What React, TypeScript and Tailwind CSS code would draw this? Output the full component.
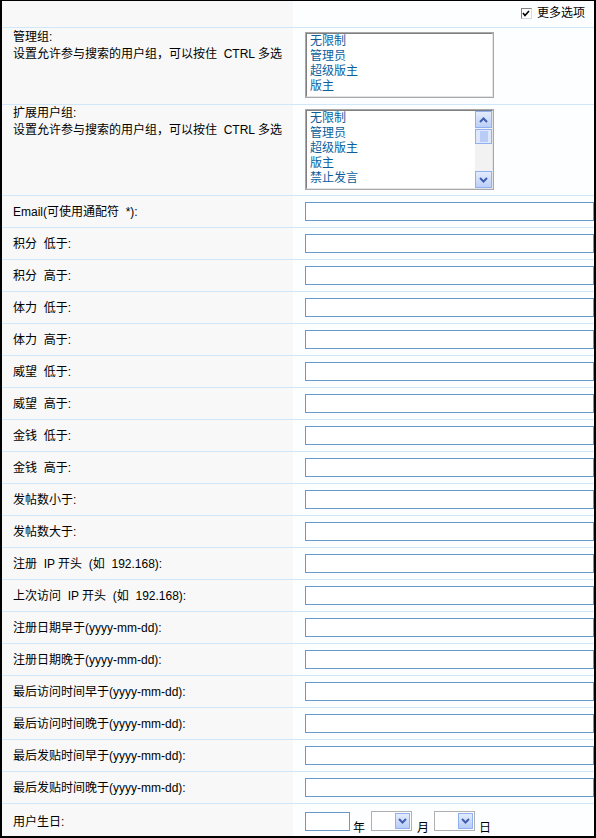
import React from "react";

const font = "font-['Liberation_Sans','Noto_Sans_CJK_SC',sans-serif]";

const fieldLabels = [
  "Email(可使用通配符\u00a0 *):",
  "积分\u00a0 低于:",
  "积分\u00a0 高于:",
  "体力\u00a0 低于:",
  "体力\u00a0 高于:",
  "威望\u00a0 低于:",
  "威望\u00a0 高于:",
  "金钱\u00a0 低于:",
  "金钱\u00a0 高于:",
  "发帖数小于:",
  "发帖数大于:",
  "注册\u00a0 IP 开头\u00a0 (如\u00a0 192.168):",
  "上次访问\u00a0 IP 开头\u00a0 (如\u00a0 192.168):",
  "注册日期早于(yyyy-mm-dd):",
  "注册日期晚于(yyyy-mm-dd):",
  "最后访问时间早于(yyyy-mm-dd):",
  "最后访问时间晚于(yyyy-mm-dd):",
  "最后发贴时间早于(yyyy-mm-dd):",
  "最后发贴时间晚于(yyyy-mm-dd):",
];

function Chevron({ up }: { up?: boolean }) {
  return (
    <svg width="9" height="6" viewBox="0 0 9 6">
      <path
        d={up ? "M1 5 L4.5 1.5 L8 5" : "M1 1 L4.5 4.5 L8 1"}
        fill="none"
        stroke="#3f5fae"
        strokeWidth="2"
      />
    </svg>
  );
}

function ScrollBtn({ up }: { up?: boolean }) {
  return (
    <div className="flex h-[17px] w-[17px] items-center justify-center border border-[#8fb0f2] bg-gradient-to-b from-[#e4ecfd] to-[#bccff8]">
      <Chevron up={up} />
    </div>
  );
}

function ListBox({ items, height, scroll }: { items: string[]; height: string; scroll?: boolean }) {
  return (
    <div className={`w-[189px] ${height} border border-[#a8a8a8] bg-white`}>
      <div className="flex h-full border-t border-l border-t-[#7f7f7f] border-l-[#7f7f7f] border-b border-r border-b-[#e4e4e4] border-r-[#e4e4e4]">
        <div className="flex-1 pl-[3px] text-[12px] leading-[15px] text-[#0b5e9c]">
          {items.map((t) => (
            <div key={t}>{t}</div>
          ))}
        </div>
        {scroll && (
          <div className="flex w-[17px] flex-col bg-[#f2f2f2]">
            <ScrollBtn up />
            <div className="mt-[1px] flex h-[15px] w-[17px] items-center justify-center border border-[#8fb0f2] bg-[#dfe7fd]">
              <div className="h-[11px] w-[8px] bg-[#b9cbf7]" />
            </div>
            <div className="flex-1" />
            <ScrollBtn />
          </div>
        )}
      </div>
    </div>
  );
}

function DropSelect() {
  return (
    <div className="flex h-[20px] w-[41px] justify-end border border-[#b0b0b0] bg-white p-[1px]">
      <div className="flex h-[16px] w-[15px] items-center justify-center border border-[#8fb0f2] bg-gradient-to-b from-[#e4ecfd] to-[#b8ccf8]">
        <Chevron />
      </div>
    </div>
  );
}

export default function App() {
  return (
    <div className={`${font} flex h-[838px] w-[596px] flex-col overflow-hidden border-x-2 border-t border-b-2 border-black text-[12px] text-black`}>
      <div className="flex h-[27px] shrink-0 border-b border-[#cfe7f8]">
        <div className="w-[291px] bg-[#f8f8f8]" />
        <div className="flex flex-1 items-center justify-end gap-[5px] bg-[#fdfeff] pr-[9px] pb-[2px]">
          <div className="flex h-[11px] w-[11px] items-center justify-center border border-t-[#808080] border-l-[#808080] border-b-[#d8d8d8] border-r-[#d8d8d8] bg-white">
            <svg width="8" height="7" viewBox="0 0 8 7">
              <path d="M1 3 L3 5.5 L7 1" fill="none" stroke="#000" strokeWidth="1.6" />
            </svg>
          </div>
          <span>更多选项</span>
        </div>
      </div>

      <div className="flex h-[77px] shrink-0 border-b border-[#cfe7f8]">
        <div className="w-[291px] bg-[#f8f8f8] pl-[11px] pt-[1px] leading-[17px]">
          <div>管理组:</div>
          <div>设置允许参与搜索的用户组，可以按住&nbsp; CTRL 多选</div>
        </div>
        <div className="flex-1 bg-[#fdfeff] pl-[12px] pt-[4px]">
          <ListBox items={["无限制", "管理员", "超级版主", "版主"]} height="h-[66px]" />
        </div>
      </div>

      <div className="flex h-[91px] shrink-0 border-b border-[#cfe7f8]">
        <div className="w-[291px] bg-[#f8f8f8] pl-[11px] leading-[17px]">
          <div>扩展用户组:</div>
          <div>设置允许参与搜索的用户组，可以按住&nbsp; CTRL 多选</div>
        </div>
        <div className="flex-1 bg-[#fdfeff] pl-[12px] pt-[4px]">
          <ListBox items={["无限制", "管理员", "超级版主", "版主", "禁止发言"]} height="h-[81px]" scroll />
        </div>
      </div>

      {fieldLabels.map((label) => (
        <div key={label} className="flex h-[32px] shrink-0 border-b border-[#cfe7f8]">
          <div className="flex w-[291px] items-center bg-[#f8f8f8] pl-[11px]">{label}</div>
          <div className="flex flex-1 items-center bg-[#fdfeff] pl-[12px]">
            <div className="h-[19px] w-[289px] border border-[#6699cc] bg-white" />
          </div>
        </div>
      ))}

      <div className="flex h-[33px] shrink-0">
        <div className="flex w-[291px] items-center bg-[#f8f8f8] pl-[11px] pt-[2px]">用户生日:</div>
        <div className="flex flex-1 items-end bg-[#fdfeff] pb-[2px] pl-[12px] leading-[14px]">
          <div className="mb-[4px] h-[19px] w-[45px] border border-[#6699cc] bg-white" />
          <span className="ml-[3px] mr-[6px]">年</span>
          <div className="mb-[4px]">
            <DropSelect />
          </div>
          <span className="ml-[5px] mr-[5px]">月</span>
          <div className="mb-[4px]">
            <DropSelect />
          </div>
          <span className="ml-[4px]">日</span>
        </div>
      </div>
    </div>
  );
}
